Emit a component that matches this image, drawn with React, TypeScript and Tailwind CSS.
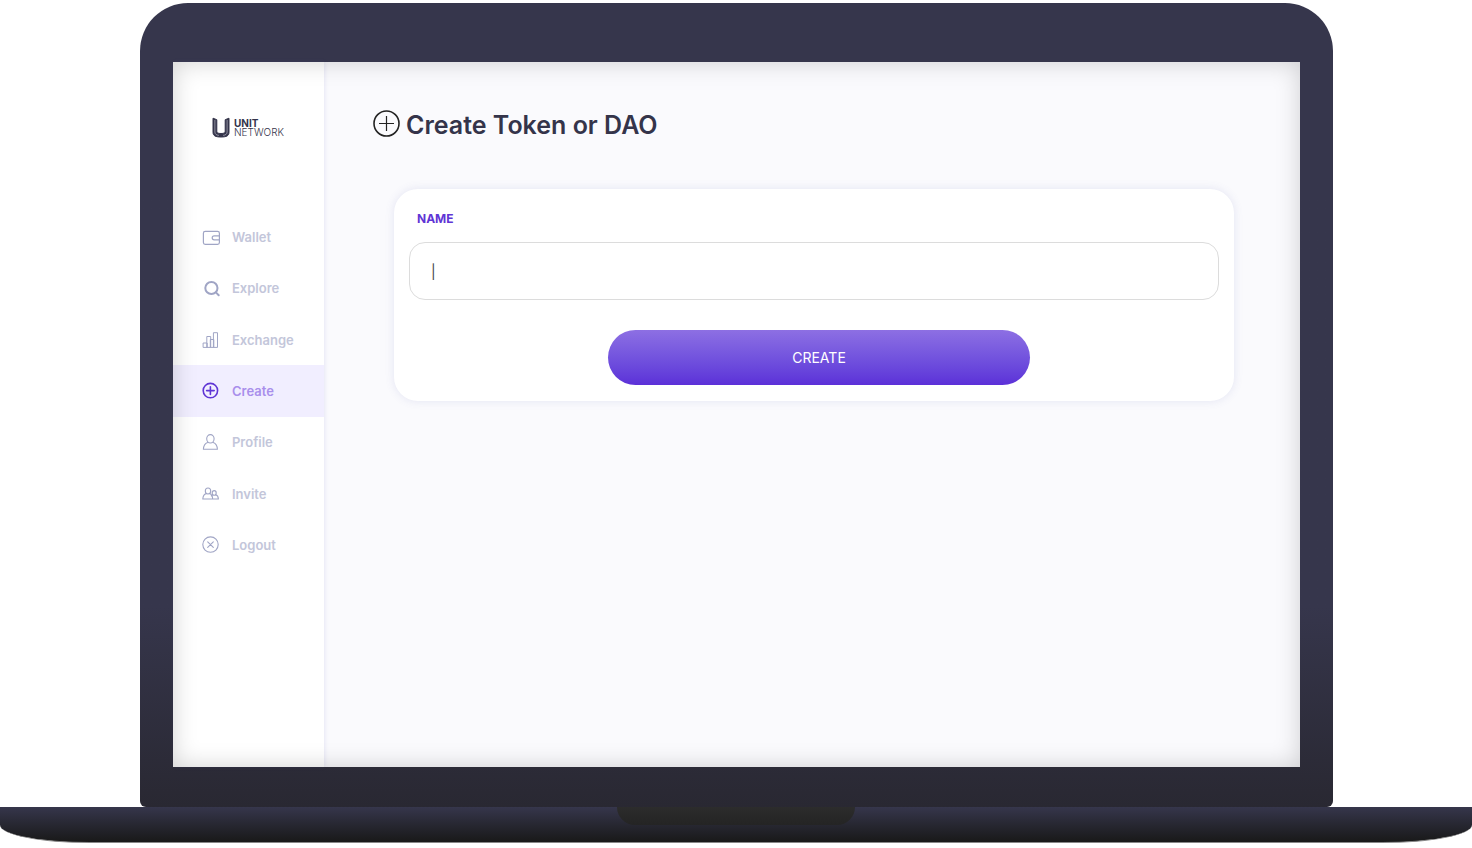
import { useState } from "react";
import type { ReactNode } from "react";

type NavItem = { label: string; icon: ReactNode };

function Icon({ children, width = 1 }: { children: ReactNode; width?: number }) {
  return (
    <svg
      viewBox="0 0 18 18"
      className="size-[18px] shrink-0"
      fill="none"
      stroke="currentColor"
      strokeWidth={width}
      strokeLinecap="round"
      strokeLinejoin="round"
      aria-hidden="true"
    >
      {children}
    </svg>
  );
}

const items: NavItem[] = [
  {
    label: "Wallet",
    icon: (
      <Icon width={1.2}>
        <rect x="1.4" y="3.4" width="16" height="13" rx="1.8" />
        <path d="M17.4 7.8h-5.2a2 2 0 0 0 0 4h5.2" />
      </Icon>
    ),
  },
  {
    label: "Explore",
    icon: (
      <Icon width={2}>
        <circle cx="9.4" cy="9" r="6.1" />
        <path d="m13.9 13.4 2.8 2.8" />
      </Icon>
    ),
  },
  {
    label: "Exchange",
    icon: (
      <Icon width={1}>
        <path d="M1.5 12h3.7v4.4H1.5zM5.200 5.500h3.500v10.900H5.200zM8.700 8.500h3.100v7.900H8.700zM11.800 1.700h3.700v14.700h-3.700z" />
      </Icon>
    ),
  },
  {
    label: "Create",
    icon: (
      <Icon width={1.6}>
        <circle cx="8.4" cy="8.6" r="7.2" />
        <path d="M8.4 4.8v7.6M4.6 8.6h7.6" />
      </Icon>
    ),
  },
  {
    label: "Profile",
    icon: (
      <Icon width={1.1}>
        <ellipse cx="8.4" cy="5.8" rx="3.7" ry="4.2" />
        <path d="M5.6 9.6c-2.6.9-4 3-4.2 6.7h14c-.2-3.7-1.6-5.8-4.2-6.7" />
      </Icon>
    ),
  },
  {
    label: "Invite",
    icon: (
      <Icon width={1.1}>
        <ellipse cx="6" cy="6" rx="2.7" ry="3" />
        <path d="M4.2 8.6C2 9.2 1 11 .8 14h15.600c-.1-2.300-.9-3.700-2.700-4.200M7.800 8.600c1.700.5 2.600 1.900 2.900 5.400M10.600 9.900c-.6.2-1 .5-1.300.9" />
        <ellipse cx="12.2" cy="7.9" rx="2" ry="2.3" />
      </Icon>
    ),
  },
  {
    label: "Logout",
    icon: (
      <Icon width={1.1}>
        <circle cx="8.5" cy="8.6" r="7.7" />
        <path d="m5.700 5.800 5.600 5.600M11.300 5.800l-5.600 5.600" />
      </Icon>
    ),
  },
];

function Logo() {
  return (
    <a href="#home" className="flex items-center gap-1 pl-[39px] text-[#34344a]">
      <svg viewBox="0 0 18 21" className="h-[21px] w-[18px] shrink-0" fill="none" aria-hidden="true">
        <path
          d="M1 1.2 4.8 2.700v11.500c0 1.700 1.100 2.300 4.200 2.300s4.200-.6 4.200-2.300V2.700L17 1.200v14c0 3.600-2.400 4.800-8 4.800s-8-1.200-8-4.800z"
          fill="currentColor"
          stroke="currentColor"
          strokeWidth="1"
          strokeLinejoin="round"
        />
        <path d="M2.900 3v12c0 2 1.300 3.100 4 3.400M15.100 3v12c0 2-1.300 3.100-4 3.400" stroke="#b7b7c4" strokeWidth=".7" />
      </svg>
      <span className="flex flex-col text-[10px] leading-[9px]">
        <span className="font-bold">UNIT</span>
        <span className="font-light">NETWORK</span>
      </span>
    </a>
  );
}

function Sidebar() {
  const [active, setActive] = useState("Create");
  return (
    <aside className="z-10 flex w-[151px] shrink-0 flex-col bg-white pt-[55px] shadow-[1px_0_4px_rgba(90,90,180,0.12)]">
      <Logo />
      <nav className="mt-[73px] grid h-[360px] auto-rows-fr">
        {items.map(({ label, icon }) => {
          const on = label === active;
          return (
            <a
              key={label}
              href={`#${label.toLowerCase()}`}
              onClick={() => setActive(label)}
              aria-current={on ? "page" : undefined}
              className={
                on
                  ? "flex items-center gap-3 bg-[#f1eeff] pl-[29px] text-[#5f35d5]"
                  : "flex items-center gap-3 pl-[29px] text-[#a0a5c5]"
              }
            >
              {icon}
              <span
                className={
                  on
                    ? "text-[13px] leading-5 font-semibold text-[#a98fec]"
                    : "text-[13px] leading-5 font-semibold text-[#c3c6da]"
                }
              >
                {label}
              </span>
            </a>
          );
        })}
      </nav>
    </aside>
  );
}

function CreateForm() {
  const [name, setName] = useState("|");
  return (
    <form
      onSubmit={(e) => e.preventDefault()}
      className="mr-[66px] ml-[70px] flex flex-col rounded-3xl bg-white px-[15px] pt-5 pb-4 shadow-[0_0_10px_rgba(90,100,180,0.14)]"
    >
      <label htmlFor="name" className="pl-2 text-xs leading-5 font-bold text-[#5f35d5]">
        NAME
      </label>
      <input
        id="name"
        value={name}
        onChange={(e) => setName(e.target.value)}
        autoComplete="off"
        className="mt-[13px] h-[58px] w-full rounded-2xl border border-[#dcdcdc] bg-white px-[21px] text-sm text-[#444] outline-none"
      />
      <button
        type="submit"
        className="mt-[30px] ml-[10px] h-[55px] w-[52%] self-center rounded-full bg-linear-to-b from-[#8d6fe3] to-[#5c30d8] text-sm text-white"
      >
        CREATE
      </button>
    </form>
  );
}

export default function App() {
  return (
    <div className="flex min-h-screen flex-col bg-white pt-[3px] font-['Inter','Liberation_Sans',sans-serif]">
      <div className="mr-[9.44%] ml-[9.51%] flex flex-col rounded-t-[48px] rounded-b-md bg-linear-to-b from-[#36364c] from-75% to-[#292832] px-[33px] pt-[59px] pb-10">
        <div className="relative flex min-h-[705px] bg-[#fafafd]">
          <Sidebar />
          <main className="min-w-0 flex-1 pt-[43px]">
            <h1 className="flex items-center gap-[6px] pl-[49px] text-[25px] leading-10 font-semibold text-[#34344a]">
              <svg viewBox="0 0 27 27" className="mb-1 size-[27px] shrink-0" fill="none" stroke="#222" aria-hidden="true">
                <circle cx="13.5" cy="13.5" r="12.5" strokeWidth="1.6" />
                <path d="M13.5 6v15M6 13.500h15" strokeWidth="1.2" />
              </svg>
              Create Token or DAO
            </h1>
            <div className="mt-[44px]">
              <CreateForm />
            </div>
          </main>
          <div className="pointer-events-none absolute inset-0 z-20 shadow-[inset_0_0_24px_rgba(0,0,0,0.18)]" />
        </div>
      </div>
      <div className="flex h-[36px] justify-center rounded-b-[90px_18px] border-b border-[#888] bg-linear-to-b from-[#36364c] to-[#191919]">
        <div className="h-[18px] w-[238px] rounded-b-[18px] bg-linear-to-b from-[#2c2c2c] to-[#242424]" />
      </div>
    </div>
  );
}
